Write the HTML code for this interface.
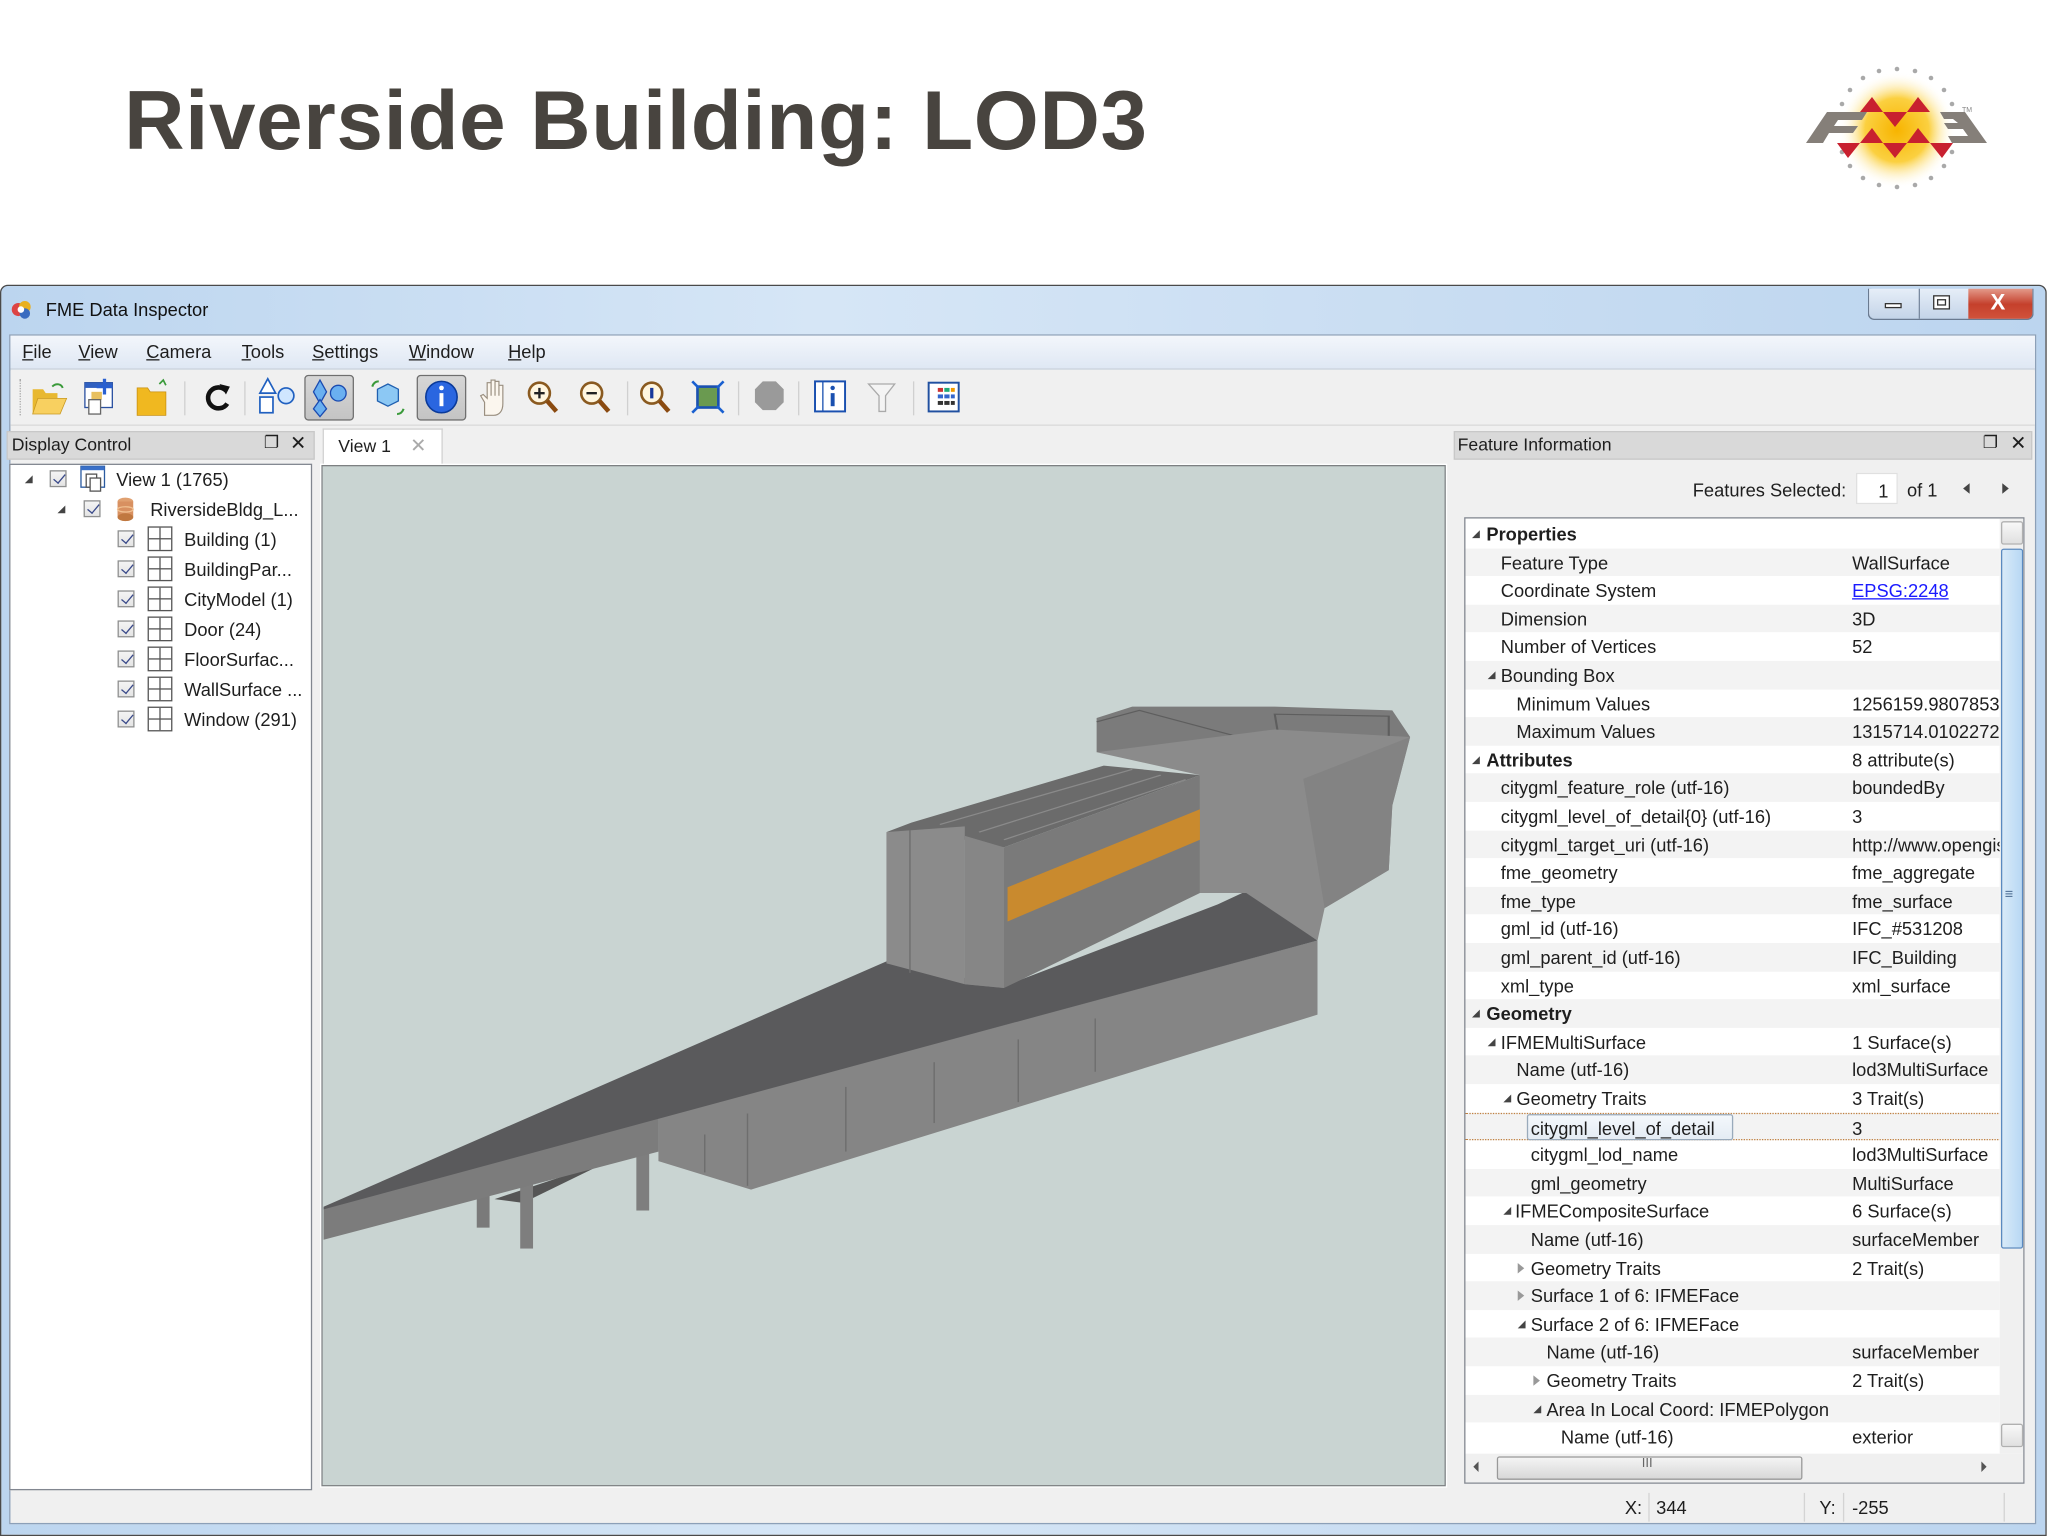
<!DOCTYPE html>
<html><head><meta charset="utf-8">
<style>
*{margin:0;padding:0;box-sizing:border-box}
html,body{width:2048px;height:1536px;overflow:hidden;background:#fff}
#s{position:absolute;left:0;top:0;width:1568px;height:1176px;transform:scale(1.306122);transform-origin:0 0;font-family:"Liberation Sans",sans-serif;font-size:14px;color:#1e1e1e}
.a{position:absolute}
.t{position:absolute;white-space:nowrap}
.row{position:absolute;left:0;width:410px;height:21.6px}
.row span{position:absolute;top:3px;white-space:nowrap}
.g{background:#f3f3f3}
.cb{position:absolute;width:13px;height:13px;border:1px solid #8e8f8f;background:linear-gradient(#f4f4f4,#e4e4e4)}
.cb:after{content:"";position:absolute;left:4px;top:0px;width:4px;height:8px;border:solid #3a4a8a;border-width:0 1.6px 1.6px 0;transform:rotate(40deg)}
.gr{position:absolute;width:19px;height:19px;border:1px solid #555;background:#fff}
.gr:before{content:"";position:absolute;left:8px;top:0;width:1px;height:17px;background:#555}
.gr:after{content:"";position:absolute;left:0;top:8px;width:17px;height:1px;background:#555}
.ex{position:absolute;width:0;height:0;border-left:6px solid transparent;border-bottom:6px solid #444}
.ec{position:absolute;width:0;height:0;border-top:4px solid transparent;border-bottom:4px solid transparent;border-left:5px solid #999}
</style></head><body>
<div id="s">
<div class="t" style="left:95px;top:55px;font-size:64px;font-weight:bold;color:#48443f;letter-spacing:0.5px">Riverside Building: LOD3</div>

<svg class="a" style="left:0;top:0" width="1568" height="1176" viewBox="0 0 2048 1536">
<defs><radialGradient id="gl"><stop offset="0" stop-color="#f7b400"/><stop offset="0.55" stop-color="#fbd040"/><stop offset="1" stop-color="#fff" stop-opacity="0"/></radialGradient></defs>
<circle cx="1897" cy="130" r="58" fill="url(#gl)"/>
<g fill="#a9a9a9">
<circle cx="1897" cy="69" r="2.3"/><circle cx="1915" cy="71" r="2.3"/><circle cx="1931" cy="78" r="2.3"/><circle cx="1944" cy="90" r="2.3"/><circle cx="1952" cy="104" r="2.3"/>
<circle cx="1879" cy="71" r="2.3"/><circle cx="1863" cy="78" r="2.3"/><circle cx="1850" cy="90" r="2.3"/><circle cx="1842" cy="104" r="2.3"/>
<circle cx="1897" cy="187" r="2.3"/><circle cx="1915" cy="185" r="2.3"/><circle cx="1931" cy="178" r="2.3"/><circle cx="1944" cy="166" r="2.3"/><circle cx="1952" cy="152" r="2.3"/>
<circle cx="1879" cy="185" r="2.3"/><circle cx="1863" cy="178" r="2.3"/><circle cx="1850" cy="166" r="2.3"/><circle cx="1842" cy="152" r="2.3"/>
</g>
<g fill="#857f79">
<polygon points="1827,112 1867,112 1862,120 1838,120 1834,126 1858,126 1853,133 1829,133 1823,143 1806,143"/>
<polygon points="1940,112 1965,112 1987,143 1952,143 1948,136 1968,136 1963,129 1948,129 1944,123 1958,123 1953,119 1944,119"/>
</g>
<g fill="#c8202f">
<polygon points="1860,112 1883,112 1872,97"/><polygon points="1907,112 1930,112 1918,97"/>
<polygon points="1883,112 1907,112 1895,127"/>
<polygon points="1860,143 1883,143 1872,128"/><polygon points="1907,143 1930,143 1918,128"/>
<polygon points="1837,143 1860,143 1848,158"/><polygon points="1883,143 1907,143 1895,158"/><polygon points="1930,143 1953,143 1942,158"/>
</g>
<text x="1962" y="112" font-size="7" fill="#888" font-family="Liberation Sans">TM</text>
</svg>

<div class="a" style="left:0;top:218px;width:1567px;height:958px;border:1px solid #4a4a4a;border-radius:6px 6px 0 0;background:linear-gradient(90deg,#bcd5ef,#d6e6f6 40%,#c9ddf2 70%,#bcd5ef)"></div>
<svg class="a" style="left:8px;top:229px" width="18" height="16" viewBox="0 0 18 16"><circle cx="6" cy="8" r="5" fill="#d44"/><circle cx="11" cy="6" r="4.5" fill="#e8b020"/><circle cx="11" cy="11" r="4" fill="#3a6cc0"/><circle cx="8" cy="8" r="2.5" fill="#fff"/></svg>
<div class="t" style="left:35px;top:229px;font-size:14px;color:#111">FME Data Inspector</div>
<div class="a" style="left:1430px;top:221px;width:127px;height:24px;border:1px solid #6a7a90;border-top:none;border-radius:0 0 5px 5px;overflow:hidden;background:linear-gradient(#e6eef8,#c4d4e8)">
 <div class="a" style="left:38px;top:0;width:1px;height:24px;background:#7a8aa0"></div>
 <div class="a" style="left:76px;top:0;width:50px;height:24px;background:linear-gradient(#e39a8a,#c5402c 50%,#d2543c)"></div>
 <div class="a" style="left:12px;top:11px;width:13px;height:4px;border:1px solid #333;background:#fff"></div>
 <div class="a" style="left:49px;top:5px;width:13px;height:11px;border:1px solid #333;background:#fff"><div class="a" style="left:2px;top:2px;width:7px;height:5px;border:1px solid #333"></div></div>
 <div class="t" style="left:93px;top:1px;font-size:17px;font-weight:bold;color:#fff">X</div>
</div>

<div class="a" style="left:7px;top:256px;width:1552px;height:911px;background:#f0f0f0;border:1px solid #8ca0b8"></div>
<div class="a" style="left:8px;top:257px;width:1550px;height:26px;background:linear-gradient(#f3f6fb,#dfe8f4);border-bottom:1px solid #c8d2de"></div>
<div class="t" style="left:17px;top:261px;font-size:14px"><u>F</u>ile</div>
<div class="t" style="left:60px;top:261px;font-size:14px"><u>V</u>iew</div>
<div class="t" style="left:112px;top:261px;font-size:14px"><u>C</u>amera</div>
<div class="t" style="left:185px;top:261px;font-size:14px"><u>T</u>ools</div>
<div class="t" style="left:239px;top:261px;font-size:14px"><u>S</u>ettings</div>
<div class="t" style="left:313px;top:261px;font-size:14px"><u>W</u>indow</div>
<div class="t" style="left:389px;top:261px;font-size:14px"><u>H</u>elp</div>
<div class="a" style="left:8px;top:284px;width:1550px;height:42px;background:#f0f0f0;border-bottom:1px solid #dadada"></div>
<div class="a" style="left:15px;top:290px;width:1px;height:28px;border-left:1px dotted #aaa"></div>
<div class="a" style="left:233px;top:287px;width:38px;height:35px;border:1px solid #6f6f6f;border-radius:3px;background:linear-gradient(#d6d6d6,#c4c4c4)"></div>
<div class="a" style="left:319px;top:287px;width:38px;height:35px;border:1px solid #6f6f6f;border-radius:3px;background:linear-gradient(#d6d6d6,#c4c4c4)"></div>
<div class="a" style="left:141px;top:292px;width:1px;height:26px;background:#d0d0d0"></div>
<div class="a" style="left:187px;top:292px;width:1px;height:26px;background:#d0d0d0"></div>
<div class="a" style="left:480px;top:292px;width:1px;height:26px;background:#d0d0d0"></div>
<div class="a" style="left:565px;top:292px;width:1px;height:26px;background:#d0d0d0"></div>
<div class="a" style="left:611px;top:292px;width:1px;height:26px;background:#d0d0d0"></div>
<div class="a" style="left:699px;top:292px;width:1px;height:26px;background:#d0d0d0"></div>
<svg class="a" style="left:0;top:284px" width="760" height="42" viewBox="0 284 760 42">
 <path d="M25 298h8l2 3h9v16H25z" fill="#e8b830"/><path d="M25 317l4-12h22l-5 12z" fill="#f8d060" stroke="#c89820" stroke-width=".6"/><path d="M40 296c3-3 7-2 8 1" stroke="#3a9a3a" fill="none" stroke-width="1.5"/>
 <rect x="65" y="293" width="21" height="19" fill="#fff" stroke="#2a50a0"/><rect x="65" y="293" width="21" height="4" fill="#3060c0"/><rect x="70" y="300" width="8" height="6" fill="#e8c060"/><path d="M80 290v12M74 296h12" stroke="#2a60d0" stroke-width="2.5"/><rect x="68" y="306" width="9" height="11" fill="#fff" stroke="#666"/>
 <path d="M105 297h8l2 3h12v18h-22z" fill="#f0b820" stroke="#c89010" stroke-width=".6"/><path d="M122 294l3-3 2 4" stroke="#3a9a3a" fill="none" stroke-width="1.3"/>
 <path d="M173 299a8 8 0 1 0 1 10" stroke="#111" stroke-width="3.5" fill="none"/><path d="M168 294l8 2-3 6z" fill="#111"/>
 <path d="M205 290l-6 11h12z" fill="#fff" stroke="#2060c0" stroke-width="1.3"/><rect x="199" y="304" width="10" height="12" fill="#fff" stroke="#2060c0" stroke-width="1.3"/><circle cx="219" cy="303" r="6" fill="#cfe6ff" stroke="#2060c0" stroke-width="1.3"/>
 <path d="M245 291l-5 9 5 9 5-9z" fill="#6ab0f0" stroke="#1a4ab0"/><circle cx="259" cy="301" r="6" fill="#6ab0f0" stroke="#1a4ab0"/><path d="M245 306l-5 7 5 6 5-6z" fill="#6ab0f0" stroke="#1a4ab0"/>
 <path d="M297 294l8 4v9l-8 4-8-4v-9z" fill="#8cc8f4" stroke="#2060b0"/><path d="M285 296c1-3 3-4 5-4" stroke="#3a9a3a" stroke-width="1.6" fill="none"/><path d="M309 313c-1 3-3 4-5 4" stroke="#3a9a3a" stroke-width="1.6" fill="none"/>
 <circle cx="338" cy="304" r="12" fill="#2a66e0" stroke="#0a3a9a" stroke-width="1.2"/><circle cx="338" cy="297" r="1.8" fill="#fff"/><rect x="336.5" y="301" width="3" height="10" fill="#fff"/>
 <path d="M371 318v-10l-3-5 2-1 3 3v-12h3v10-12h3v12-11h3v11-8h3v14c0 6-3 9-7 9z" fill="#fbf6ee" stroke="#9a8f80" stroke-width=".9"/>
 <circle cx="413" cy="301" r="8" fill="#fff6e0" stroke="#8a5a20" stroke-width="2"/><path d="M419 307l7 8" stroke="#8a4a10" stroke-width="3.5"/><path d="M409 301h8M413 297v8" stroke="#222" stroke-width="1.8"/>
 <circle cx="453" cy="301" r="8" fill="#fff6e0" stroke="#8a5a20" stroke-width="2"/><path d="M459 307l7 8" stroke="#8a4a10" stroke-width="3.5"/><path d="M449 301h8" stroke="#222" stroke-width="1.8"/>
 <circle cx="499" cy="301" r="8" fill="#fff6e0" stroke="#8a5a20" stroke-width="2"/><path d="M505 307l7 8" stroke="#8a4a10" stroke-width="3.5"/><path d="M499 297v8" stroke="#1a3a9a" stroke-width="2.5"/>
 <rect x="534" y="296" width="16" height="16" fill="#6a9a50" stroke="#1a50b0" stroke-width="2"/><path d="M530 292l5 5M554 292l-5 5M530 316l5-5M554 316l-5-5" stroke="#1a60d0" stroke-width="2"/>
 <path d="M584 292h10l6 6v10l-6 6h-10l-6-6v-10z" fill="#9a9a9a"/>
 <rect x="624" y="292" width="23" height="23" fill="#fff" stroke="#1a50b0" stroke-width="1.5"/><path d="M630 292v23" stroke="#1a50b0"/><rect x="636" y="301" width="3" height="10" fill="#1a50b0"/><circle cx="637.5" cy="297" r="1.7" fill="#1a50b0"/>
 <path d="M665 294h20l-7 9v12h-5v-12z" fill="#f4f4f4" stroke="#aaa"/>
 <rect x="711" y="293" width="23" height="22" fill="#fff" stroke="#2050a0" stroke-width="1.5"/><g fill="#c33"><rect x="718" y="297" width="4" height="3"/></g><g fill="#2a7"><rect x="723" y="297" width="4" height="3"/></g><g fill="#36c"><rect x="718" y="302" width="4" height="3"/><rect x="723" y="302" width="4" height="3"/><rect x="728" y="302" width="3" height="3"/></g><g fill="#333"><rect x="718" y="307" width="4" height="3"/><rect x="723" y="307" width="4" height="3"/><rect x="728" y="307" width="3" height="3"/></g><rect x="728" y="297" width="3" height="3" fill="#e90"/>
</svg>

<div class="a" style="left:5px;top:330px;width:236px;height:22px;background:#d9d9d9;border:1px solid #c8c8c8"></div>
<div class="t" style="left:9px;top:333px;font-size:13.5px">Display Control</div>
<div class="t" style="left:202px;top:331px;font-size:13px">&#x2750;</div>
<div class="t" style="left:222px;top:330px;font-size:15px">✕</div>
<div class="a" style="left:7px;top:355px;width:232px;height:786px;background:#fff;border:1px solid #828790"></div>
<div class="ex" style="left:19px;top:364px"></div>
<div class="cb" style="left:38px;top:360px"></div>
<svg class="a" style="left:61px;top:356px" width="22" height="22"><rect x="1" y="1" width="18" height="16" fill="#fff" stroke="#2a5aa0"/><rect x="1" y="1" width="18" height="3" fill="#3a70c8"/><rect x="5" y="7" width="8" height="10" fill="#fff" stroke="#555"/><rect x="8" y="10" width="8" height="10" fill="#fff" stroke="#555"/></svg>
<div class="t" style="left:89px;top:359px">View 1 (1765)</div>
<div class="ex" style="left:44px;top:387px"></div>
<div class="cb" style="left:64px;top:383px"></div>
<svg class="a" style="left:88px;top:380px" width="16" height="20"><ellipse cx="8" cy="4" rx="6" ry="3" fill="#e0a070"/><rect x="2" y="4" width="12" height="12" fill="#d89060"/><ellipse cx="8" cy="16" rx="6" ry="3" fill="#c07840"/><ellipse cx="8" cy="10" rx="6" ry="2" fill="none" stroke="#f0c090"/></svg>
<div class="t" style="left:115px;top:382px">RiversideBldg_L...</div>
<div class="cb" style="left:90px;top:406px"></div><div class="gr" style="left:113px;top:403px"></div><div class="t" style="left:141px;top:405px">Building (1)</div>
<div class="cb" style="left:90px;top:429px"></div><div class="gr" style="left:113px;top:426px"></div><div class="t" style="left:141px;top:428px">BuildingPar...</div>
<div class="cb" style="left:90px;top:452px"></div><div class="gr" style="left:113px;top:449px"></div><div class="t" style="left:141px;top:451px">CityModel (1)</div>
<div class="cb" style="left:90px;top:475px"></div><div class="gr" style="left:113px;top:472px"></div><div class="t" style="left:141px;top:474px">Door (24)</div>
<div class="cb" style="left:90px;top:498px"></div><div class="gr" style="left:113px;top:495px"></div><div class="t" style="left:141px;top:497px">FloorSurfac...</div>
<div class="cb" style="left:90px;top:521px"></div><div class="gr" style="left:113px;top:518px"></div><div class="t" style="left:141px;top:520px">WallSurface ...</div>
<div class="cb" style="left:90px;top:544px"></div><div class="gr" style="left:113px;top:541px"></div><div class="t" style="left:141px;top:543px">Window (291)</div>

<div class="a" style="left:247px;top:328px;width:92px;height:30px;background:#fff;border:1px solid #d0d0d0;border-bottom:none"></div>
<div class="t" style="left:259px;top:334px;font-size:13.5px">View 1</div>
<div class="t" style="left:314px;top:332px;font-size:15px;color:#aaa">✕</div>
<div class="a" style="left:246px;top:356px;width:861px;height:782px;background:#c9d4d2;border:1px solid #7d8082;outline:1px solid #fff"></div>
<svg class="a" style="left:0;top:0" width="1568" height="1176" viewBox="0 0 2048 1536">
<g transform="translate(320,680) scale(0.7125,0.3803)">
 <polygon points="245,1365 405,1265 285,1375" fill="#555"/>
 <rect x="220" y="1355" width="18" height="85" fill="#7a7a7a"/>
 <rect x="281" y="1305" width="18" height="190" fill="#7e7e7e"/>
 <rect x="444" y="1215" width="18" height="180" fill="#7e7e7e"/>
 <polygon points="5,1390 475,1152 475,1240 5,1472" fill="#7c7c7c"/>
 <polygon points="475,1152 1400,685 1400,880 605,1340 475,1265" fill="#858585"/>
 <g stroke="#6e6e6e" stroke-width="2"><line x1="540" y1="1195" x2="540" y2="1295"/><line x1="600" y1="1140" x2="600" y2="1330"/><line x1="738" y1="1070" x2="738" y2="1240"/><line x1="862" y1="1005" x2="862" y2="1165"/><line x1="980" y1="945" x2="980" y2="1110"/><line x1="1088" y1="890" x2="1088" y2="1030"/></g>
 <polygon points="5,1385 795,740 960,805 1260,590 1300,555 1400,685 5,1392" fill="#5a5a5c"/>
 <polygon points="1090,100 1140,70 1340,70 1505,80 1530,150 1090,190" fill="#7b7b7b"/>
 <g stroke="#5e5e5e" stroke-width="3" fill="none"><path d="M1090,110 L1150,80 L1330,170"/><path d="M1340,90 L1500,95 L1500,190 L1350,200 Z"/></g>
 <polygon points="1090,190 1340,130 1530,150 1505,330 1500,500 1410,600 1400,685 1300,560 1235,560 1235,250" fill="#8b8b8b"/>
 <polygon points="1380,260 1530,150 1505,330 1500,500 1410,600" fill="#838383"/>
 <polygon points="795,400 830,375 1100,225 1235,250 960,440 905,420" fill="#6b6b6b"/>
 <g stroke="#8a8a8a" stroke-width="3"><line x1="870" y1="380" x2="1140" y2="235"/><line x1="925" y1="400" x2="1180" y2="250"/><line x1="960" y1="420" x2="1215" y2="262"/></g>
 <polygon points="795,400 905,385 905,800 795,745" fill="#8b8b8b"/>
 <line x1="828" y1="395" x2="828" y2="770" stroke="#6e6e6e" stroke-width="2"/>
 <polygon points="905,410 960,440 1235,250 1235,560 960,810 905,800" fill="#7a7a7a"/>
 <polygon points="905,410 960,440 960,810 905,800" fill="#868686"/>
 <polygon points="965,545 1235,340 1235,420 965,635" fill="#c98a2e"/>
</g>
</svg>

<div class="a" style="left:1113px;top:330px;width:443px;height:22px;background:#d9d9d9;border:1px solid #c8c8c8"></div>
<div class="t" style="left:1116px;top:333px;font-size:13.5px">Feature Information</div>
<div class="t" style="left:1518px;top:331px;font-size:13px">&#x2750;</div>
<div class="t" style="left:1539px;top:330px;font-size:15px">✕</div>
<div class="t" style="left:1296px;top:367px">Features Selected:</div>
<div class="a" style="left:1421px;top:362px;width:32px;height:24px;background:#fff;border:1px solid #e0e0e0"></div>
<div class="t" style="left:1438px;top:368px">1</div>
<div class="t" style="left:1460px;top:367px">of 1</div>
<div class="a" style="left:1503px;top:370px;border-top:4px solid transparent;border-bottom:4px solid transparent;border-right:5px solid #444"></div>
<div class="a" style="left:1533px;top:370px;border-top:4px solid transparent;border-bottom:4px solid transparent;border-left:5px solid #444"></div>

<div class="a" style="left:1121px;top:396px;width:429px;height:740px;background:#fff;border:1px solid #828790;overflow:hidden">
 <div class="a" style="left:0;top:1px;width:409px;height:714px;overflow:hidden">
  <div class="row" style="top:0"><div class="ex" style="left:5px;top:8px"></div><span style="left:16px;font-weight:bold">Properties</span></div>
  <div class="row g" style="top:21.6px"><span style="left:27px">Feature Type</span><span style="left:296px">WallSurface</span></div>
  <div class="row" style="top:43.2px"><span style="left:27px">Coordinate System</span><span style="left:296px;color:#1a1aff;text-decoration:underline">EPSG:2248</span></div>
  <div class="row g" style="top:64.8px"><span style="left:27px">Dimension</span><span style="left:296px">3D</span></div>
  <div class="row" style="top:86.4px"><span style="left:27px">Number of Vertices</span><span style="left:296px">52</span></div>
  <div class="row g" style="top:108px"><div class="ex" style="left:17px;top:8px"></div><span style="left:27px">Bounding Box</span></div>
  <div class="row" style="top:129.6px"><span style="left:39px">Minimum Values</span><span style="left:296px">1256159.9807853</span></div>
  <div class="row g" style="top:151.2px"><span style="left:39px">Maximum Values</span><span style="left:296px">1315714.0102272</span></div>
  <div class="row" style="top:172.8px"><div class="ex" style="left:5px;top:8px"></div><span style="left:16px;font-weight:bold">Attributes</span><span style="left:296px">8 attribute(s)</span></div>
  <div class="row g" style="top:194.4px"><span style="left:27px">citygml_feature_role (utf-16)</span><span style="left:296px">boundedBy</span></div>
  <div class="row" style="top:216px"><span style="left:27px">citygml_level_of_detail{0} (utf-16)</span><span style="left:296px">3</span></div>
  <div class="row g" style="top:237.6px"><span style="left:27px">citygml_target_uri (utf-16)</span><span style="left:296px">http://www.opengis.net</span></div>
  <div class="row" style="top:259.2px"><span style="left:27px">fme_geometry</span><span style="left:296px">fme_aggregate</span></div>
  <div class="row g" style="top:280.8px"><span style="left:27px">fme_type</span><span style="left:296px">fme_surface</span></div>
  <div class="row" style="top:302.4px"><span style="left:27px">gml_id (utf-16)</span><span style="left:296px">IFC_#531208</span></div>
  <div class="row g" style="top:324px"><span style="left:27px">gml_parent_id (utf-16)</span><span style="left:296px">IFC_Building</span></div>
  <div class="row" style="top:345.6px"><span style="left:27px">xml_type</span><span style="left:296px">xml_surface</span></div>
  <div class="row g" style="top:367.2px"><div class="ex" style="left:5px;top:8px"></div><span style="left:16px;font-weight:bold">Geometry</span></div>
  <div class="row" style="top:388.8px"><div class="ex" style="left:17px;top:8px"></div><span style="left:27px">IFMEMultiSurface</span><span style="left:296px">1 Surface(s)</span></div>
  <div class="row g" style="top:410.4px"><span style="left:39px">Name (utf-16)</span><span style="left:296px">lod3MultiSurface</span></div>
  <div class="row" style="top:432px"><div class="ex" style="left:29px;top:8px"></div><span style="left:39px">Geometry Traits</span><span style="left:296px">3 Trait(s)</span></div>
  <div class="row g" style="top:453.6px;border-top:1px dotted #c08040;border-bottom:1px dotted #c08040"><div class="a" style="left:47px;top:0;width:158px;height:20px;border:1px solid #9ab;border-radius:2px;background:linear-gradient(#f4f8fc,#e4ecf4)"></div><span style="left:50px">citygml_level_of_detail</span><span style="left:296px">3</span></div>
  <div class="row" style="top:475.2px"><span style="left:50px">citygml_lod_name</span><span style="left:296px">lod3MultiSurface</span></div>
  <div class="row g" style="top:496.8px"><span style="left:50px">gml_geometry</span><span style="left:296px">MultiSurface</span></div>
  <div class="row" style="top:518.4px"><div class="ex" style="left:29px;top:8px"></div><span style="left:38px">IFMECompositeSurface</span><span style="left:296px">6 Surface(s)</span></div>
  <div class="row g" style="top:540px"><span style="left:50px">Name (utf-16)</span><span style="left:296px">surfaceMember</span></div>
  <div class="row" style="top:561.6px"><div class="ec" style="left:40px;top:7px"></div><span style="left:50px">Geometry Traits</span><span style="left:296px">2 Trait(s)</span></div>
  <div class="row g" style="top:583.2px"><div class="ec" style="left:40px;top:7px"></div><span style="left:50px">Surface 1 of 6: IFMEFace</span></div>
  <div class="row" style="top:604.8px"><div class="ex" style="left:40px;top:8px"></div><span style="left:50px">Surface 2 of 6: IFMEFace</span></div>
  <div class="row g" style="top:626.4px"><span style="left:62px">Name (utf-16)</span><span style="left:296px">surfaceMember</span></div>
  <div class="row" style="top:648px"><div class="ec" style="left:52px;top:7px"></div><span style="left:62px">Geometry Traits</span><span style="left:296px">2 Trait(s)</span></div>
  <div class="row g" style="top:669.6px"><div class="ex" style="left:52px;top:8px"></div><span style="left:62px">Area In Local Coord: IFMEPolygon</span></div>
  <div class="row" style="top:691.2px"><span style="left:73px">Name (utf-16)</span><span style="left:296px">exterior</span></div>
 </div>
 <div class="a" style="left:409px;top:0;width:19px;height:716px;background:#f0f0f0"></div>
 <div class="a" style="left:410px;top:2px;width:17px;height:18px;border:1px solid #b0b0b0;border-radius:2px;background:linear-gradient(#f8f8f8,#e0e0e0)"></div>
 <div class="a" style="left:410px;top:23px;width:17px;height:536px;border:1px solid #5a8ac0;border-radius:2px;background:linear-gradient(90deg,#d8eaf8,#b8d8f4)"></div>
 <div class="t" style="left:413px;top:282px;font-size:11px;color:#4a6a90">≡</div>
 <div class="a" style="left:410px;top:693px;width:17px;height:18px;border:1px solid #b0b0b0;border-radius:2px;background:linear-gradient(#f8f8f8,#e0e0e0)"></div>
 <div class="a" style="left:0;top:716px;width:428px;height:22px;background:#f0f0f0"></div>
 <div class="a" style="left:6px;top:722px;border-top:4px solid transparent;border-bottom:4px solid transparent;border-right:4px solid #555"></div>
 <div class="a" style="left:24px;top:718px;width:234px;height:18px;border:1px solid #999;border-radius:2px;background:linear-gradient(#f4f4f4,#d8d8d8)"></div>
 <div class="t" style="left:135px;top:718px;font-size:10px;color:#666">III</div>
 <div class="a" style="left:395px;top:722px;border-top:4px solid transparent;border-bottom:4px solid transparent;border-left:4px solid #555"></div>
</div>

<div class="t" style="left:1244px;top:1146px">X:</div>
<div class="a" style="left:1262px;top:1143px;width:1px;height:22px;background:#d4d4d4"></div>
<div class="t" style="left:1268px;top:1146px">344</div>
<div class="a" style="left:1381px;top:1143px;width:1px;height:22px;background:#d4d4d4"></div>
<div class="t" style="left:1393px;top:1146px">Y:</div>
<div class="a" style="left:1411px;top:1143px;width:1px;height:22px;background:#d4d4d4"></div>
<div class="t" style="left:1418px;top:1146px">-255</div>
<div class="a" style="left:1534px;top:1143px;width:1px;height:22px;background:#d4d4d4"></div>
</div>
</body></html>
